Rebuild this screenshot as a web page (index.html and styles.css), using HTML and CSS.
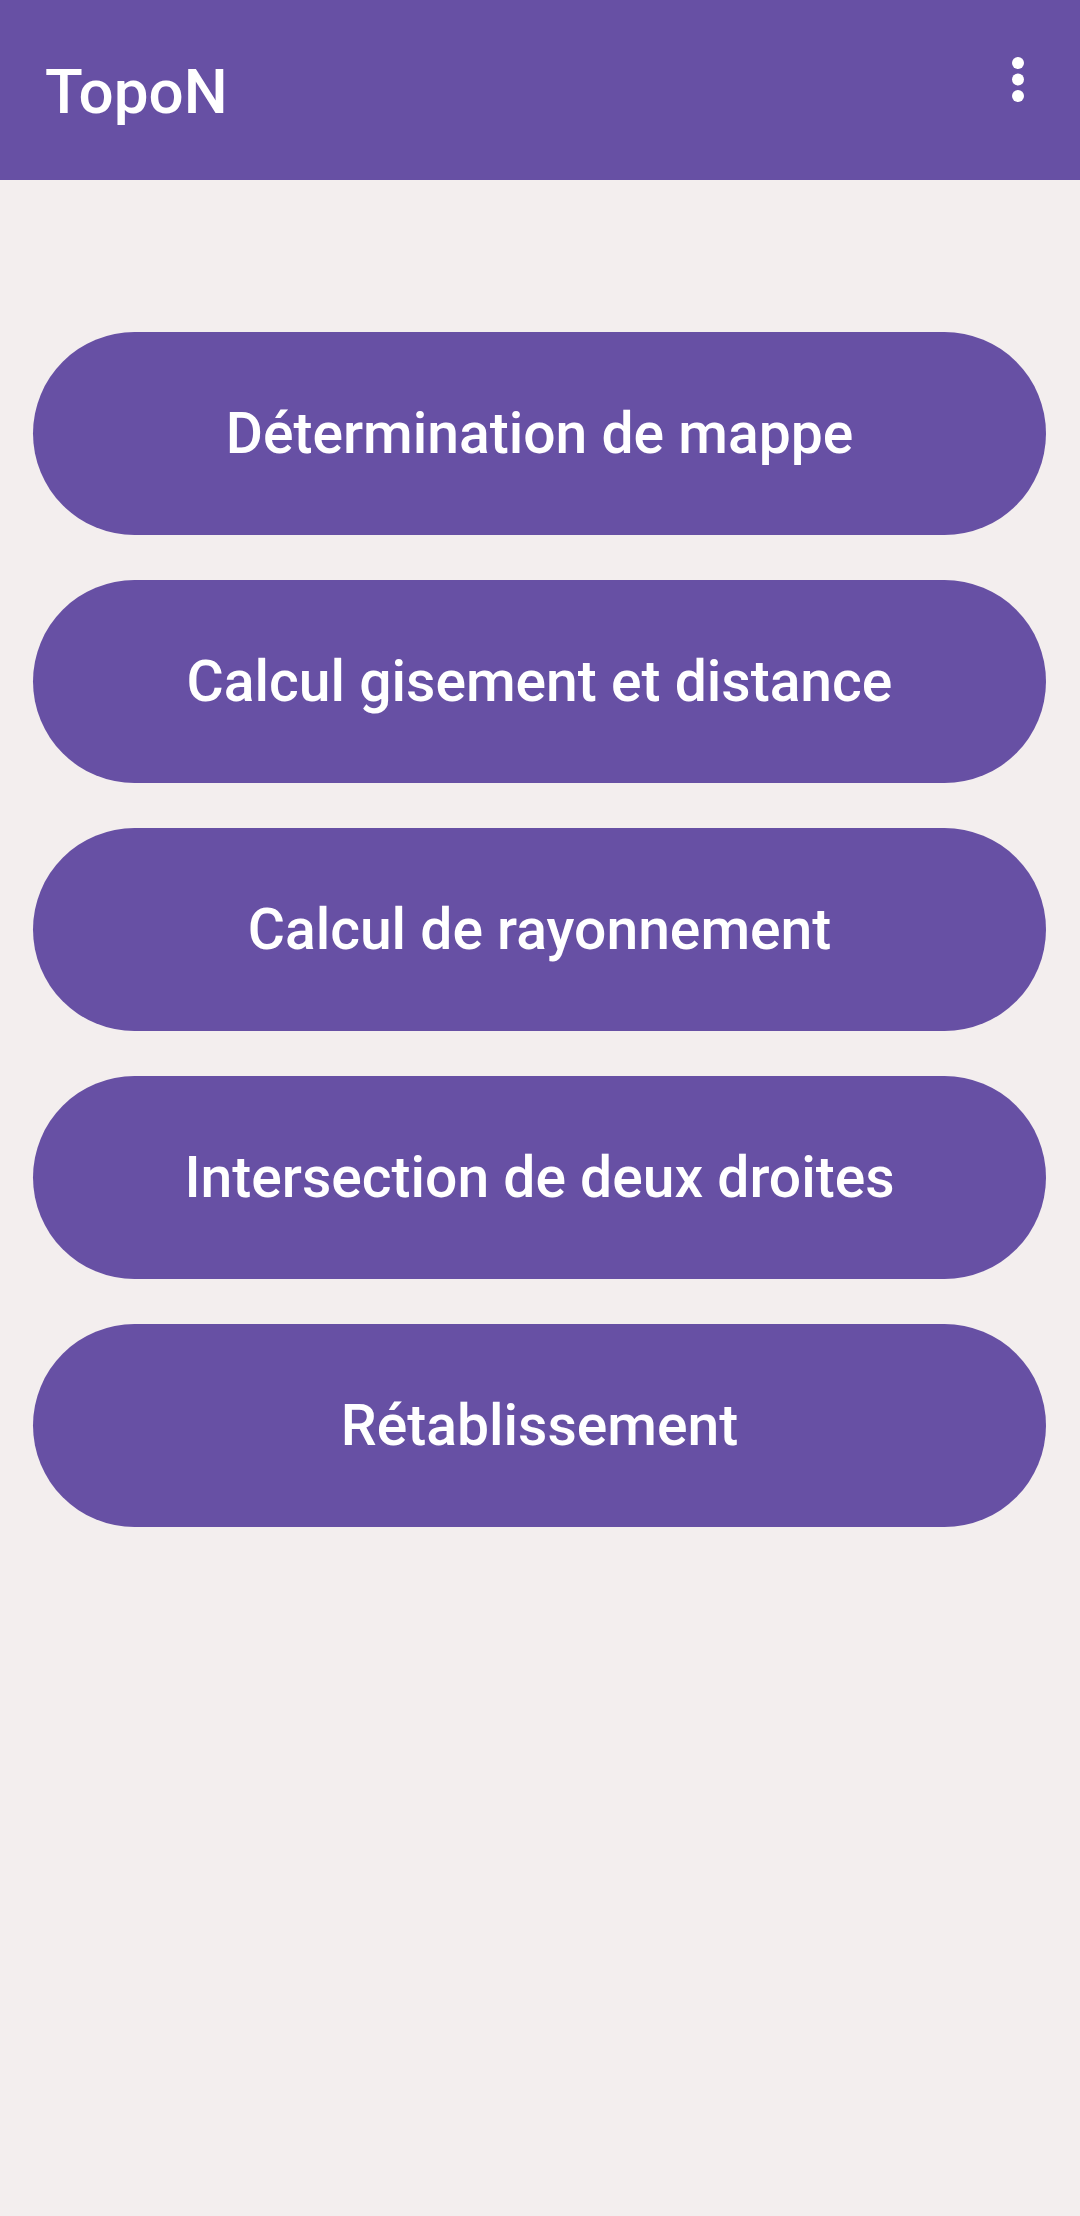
FILE: index.html
```html
<!DOCTYPE html>
<html lang="fr">
<head>
<meta charset="utf-8">
<title>TopoN</title>
<link rel="stylesheet" href="styles.css">
</head>
<body>
<header class="toolbar">
  <h1 class="title">TopoN</h1>
  <button class="overflow" aria-label="Plus d'options">
    <svg width="24" height="60" viewBox="0 0 24 60" aria-hidden="true">
      <circle cx="12" cy="13" r="6" fill="#fff"/>
      <circle cx="12" cy="29.5" r="6" fill="#fff"/>
      <circle cx="12" cy="46" r="6" fill="#fff"/>
    </svg>
  </button>
</header>
<main class="menu">
  <button class="menu-btn">Détermination de mappe</button>
  <button class="menu-btn">Calcul gisement et distance</button>
  <button class="menu-btn">Calcul de rayonnement</button>
  <button class="menu-btn">Intersection de deux droites</button>
  <button class="menu-btn">Rétablissement</button>
</main>
</body>
</html>
```
FILE: styles.css
```css
html, body {
  margin: 0;
  padding: 0;
}
body {
  background: #f3eeee;
  font-family: Roboto, "Liberation Sans", sans-serif;
  min-height: 2216px;
}
.toolbar {
  height: 180px;
  background: #6750a4;
  display: flex;
  align-items: flex-start;
  justify-content: space-between;
  box-sizing: border-box;
  padding: 0 50px 0 45px;
}
.title {
  margin: 0;
  padding-top: 56px;
  font-size: 62px;
  font-weight: 500;
  line-height: 72px;
  color: #fff;
}
.overflow {
  background: none;
  border: 0;
  padding: 0;
  margin-top: 50px;
  width: 24px;
  height: 60px;
  display: block;
}
.overflow svg {
  display: block;
}
.menu {
  display: flex;
  flex-direction: column;
  gap: 45px;
  padding: 152px 34px 0 33px;
}
.menu-btn {
  height: 203px;
  border: 0;
  border-radius: 102px;
  background: #6750a4;
  color: #fff;
  font-family: Roboto, "Liberation Sans", sans-serif;
  font-size: 57px;
  font-weight: 500;
  letter-spacing: 0;
  padding: 0 40px;
}
```
